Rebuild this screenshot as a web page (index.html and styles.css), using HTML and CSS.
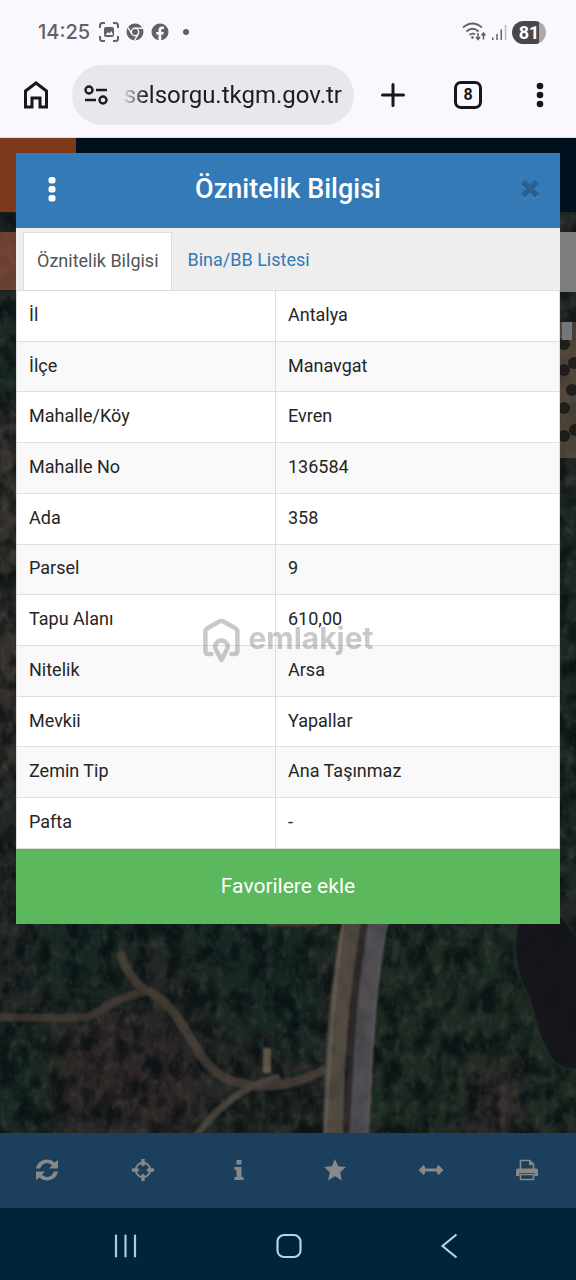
FILE: index.html
```html
<!DOCTYPE html>
<html lang="tr">
<head>
<meta charset="utf-8">
<meta name="viewport" content="width=device-width, initial-scale=1">
<title>Parsel Sorgu</title>
<link rel="stylesheet" href="styles.css">
</head>
<body>
<header class="chrome">
  <div class="status">
    <time class="clock">14:25</time>
    <svg width="20" height="20" viewBox="0 0 20 20" fill="none" stroke="#626166" stroke-width="2"><path d="M1 6V3.500Q1 1 3.500 1H6M14 1h2.500Q19 1 19 3.500V6M19 14v2.500Q19 19 16.500 19H14M6 19H3.500Q1 19 1 16.500V14"/><rect x="5" y="5" width="10" height="10" rx="2" fill="#626166" stroke="none"/><path d="M6.500 13l2.500-3 1.500 1.500L12.500 9l1.500 4z" fill="#f9f8fe" stroke="none"/></svg>
    <svg width="18" height="18" viewBox="0 0 18 18"><circle cx="9" cy="9" r="8.500" fill="#626166"/><circle cx="9" cy="9" r="3.700" fill="#626166" stroke="#f9f8fe" stroke-width="1.400"/><path d="M9 5.300h8M5.800 10.900L2 4.500M12.200 10.900L8.500 17.500" stroke="#f9f8fe" stroke-width="1.400"/></svg>
    <svg width="18" height="18" viewBox="0 0 18 18"><circle cx="9" cy="9" r="8.500" fill="#626166"/><path d="M7.500 18v-6.500H5.200V9h2.300V7.200C7.500 4.800 8.800 3.600 11 3.600l2 .2v2.100h-1.300c-1 0-1.400.6-1.400 1.400V9h2.500l-.4 2.500h-2.100V18z" fill="#f9f8fe"/></svg>
    <i class="more-dot"></i>
    <span class="spacer"></span>
    <div class="signal">
      <svg width="25" height="20" viewBox="0 0 25 20" fill="none" stroke="#626166" stroke-width="1.800"><path d="M1 5.500Q10.500-2.500 20 5.500M4.500 9.500Q10.500 4 16.500 9.500M7.500 13Q10.500 10.500 13 12.500"/><circle cx="10.500" cy="15.500" r="1" fill="#626166" stroke-width=".8"/><path d="M16 11v6M14 15l2 2.500 2-2.500M21.500 17.500v-6M19.500 13.500l2-2.500 2 2.500" stroke-width="1.500"/></svg>
      <svg width="15" height="17" viewBox="0 0 15 17"><path d="M0 13.500h1.500V16H0zM4.300 10h1.500v6H4.300zM8.500 5.500H10V16H8.500z" fill="#626166"/><path d="M12.800 1h1.500v15h-1.500z" fill="#bbbac0"/></svg>
      <span class="battery">81</span>
    </div>
  </div>
  <div class="browser">
    <button class="plain" aria-label="Ana sayfa"><svg width="26" height="28" viewBox="0 0 26 28" fill="none" stroke="#17171b" stroke-width="3"><path d="M2.500 10L13 2l10.500 8v16h-6.500v-9H9v9H2.500z"/></svg></button>
    <label class="address">
      <svg width="24" height="20" viewBox="0 0 24 20" fill="none" stroke="#1d1d21" stroke-width="2.400"><circle cx="5" cy="5" r="3.500"/><path d="M12 5h11M1 15h11"/><circle cx="19" cy="15" r="3.500"/></svg>
      <input type="text" value="selsorgu.tkgm.gov.tr" aria-label="Adres">
    </label>
    <div class="actions">
      <button class="plain" aria-label="Yeni sekme"><svg width="24" height="24" viewBox="0 0 24 24" stroke="#17171b" stroke-width="3" stroke-linecap="round"><path d="M12 1.500v21M1.500 12h21"/></svg></button>
      <button class="tabs-count">8</button>
      <button class="plain" aria-label="Menü"><svg width="8" height="26" viewBox="0 0 8 26" fill="#17171b"><circle cx="4" cy="4" r="3.300"/><circle cx="4" cy="13" r="3.300"/><circle cx="4" cy="22" r="3.300"/></svg></button>
    </div>
  </div>
</header>

<main class="app">
  <div class="app-bar"><div class="app-brand"></div></div>
  <div class="map">
    <svg viewBox="0 0 576 921" preserveAspectRatio="xMidYMid slice">
      <defs>
        <filter id="leaf" x="0" y="0" width="100%" height="100%" color-interpolation-filters="sRGB"><feTurbulence type="fractalNoise" baseFrequency=".06 .045" numOctaves="5" seed="8"/><feColorMatrix values="0 0 0 0 .03  0 0 0 0 .06  0 0 0 0 .07  3 0 0 0 -1.200"/></filter>
        <filter id="glow" x="0" y="0" width="100%" height="100%" color-interpolation-filters="sRGB"><feTurbulence type="fractalNoise" baseFrequency=".12 .08" numOctaves="4" seed="21"/><feColorMatrix values="0 0 0 0 .38  0 0 0 0 .38  0 0 0 0 .33  0 2.500 0 0 -1.200"/></filter>
        <filter id="soft" x="-30%" y="-30%" width="160%" height="160%"><feGaussianBlur stdDeviation="14"/></filter>
        <filter id="edge"><feGaussianBlur stdDeviation=".8"/></filter>
      </defs>
      <rect width="576" height="921" fill="#232725"/>
      <g filter="url(#soft)">
        <path d="M0 110h30v80H0z" fill="#15281f"/>
        <path d="M-10 205h40v360h-40z" fill="#38322d"/>
        <path d="M40 700h85v90H40zM-10 820h60v110h-60zM130 690h190v145l-80-20-60-80z" fill="#152622"/>
        <path d="M60 815l80-10 70 55-20 60H60z" fill="#2e2827"/>
        <path d="M375 710h130l40 100 31 30v80H365z" fill="#1c2b22"/>
        <path d="M555 270h30v420h-30z" fill="#1a2721"/>
        <path d="M475 850h40l10 70h-60z" fill="#30292a"/>
        <path d="M250 865h65v56h-90z" fill="#1a211f"/>
      </g>
      <rect width="576" height="921" filter="url(#leaf)" opacity=".75"/>
      <rect width="576" height="921" filter="url(#glow)" opacity=".28"/>
      <path d="M0 20h22v58H0z" fill="#724437"/>
      <path d="M552 110h24v136h-24z" fill="#51473b"/>
      <g fill="#211f1b"><circle cx="564" cy="132" r="6"/><circle cx="574" cy="151" r="6"/><circle cx="564" cy="158" r="6"/><circle cx="572" cy="178" r="6"/><circle cx="564" cy="196" r="6"/><circle cx="575" cy="218" r="6"/><circle cx="564" cy="224" r="6"/></g>
      <path d="M519 704Q508 745 525 778C535 798 535 820 547 840Q556 860 580 857V730L562 704z" fill="#12151c" stroke="#253029" stroke-width="2" filter="url(#edge)"/>
      <g fill="none" filter="url(#edge)">
        <path d="M120 740Q128 766 145 778C187 793 192 855 230 868Q275 884 326 857" stroke="#453e35" stroke-width="9"/>
        <path d="M-5 805Q65 807 87 805C105 798 118 784 145 780" stroke="#3f3931" stroke-width="8"/>
        <path d="M195 925Q232 875 280 865" stroke="#4c453d" stroke-width="7"/>
        <path d="M267 836v25" stroke="#64594b" stroke-width="8"/>
        <path d="M353 705C340 770 335 830 333 925" stroke="#524b42" stroke-width="20"/>
        <path d="M365 705C354 770 352 830 348 925" stroke="#302c2a" stroke-width="7"/>
        <path d="M379 705C365 780 364 845 359 925" stroke="#515052" stroke-width="19"/>
        <path d="M344 705C332 785 330 850 325 925" stroke="#6b6258" stroke-width="2"/>
        <path d="M389 705C373 780 372 845 368 925" stroke="#68655f" stroke-width="1"/>
        <path d="M267 711h48l12-7" stroke="#443a2d" stroke-width="7"/>
      </g>
      <rect width="576" height="921" filter="url(#leaf)" opacity=".15"/>
      <path d="M560 20h16v60h-16z" fill="#7d7d7d"/>
      <path d="M562 110h10v18h-10z" fill="#73777a"/>
    </svg>
  </div>
  <nav class="toolbar">
    <button aria-label="Yenile"><svg width="22" height="22" viewBox="0 0 22 22" fill="#888"><path d="M0 9.500C1 4 5.500.5 11 .5c3 0 5.500 1.200 7.500 3L22 1v8.500h-9l3-3C14.500 5 13 4 11 4c-3.300 0-5.800 2.500-6.800 5.500zM22 12.500c-1 5.500-5.500 9-11 9-3 0-5.500-1.200-7.500-3L0 21v-8.500h9l-3 3c1.500 1.500 3 2.500 5 2.500 3.300 0 5.800-2.500 6.800-5.500z"/></svg></button>
    <button aria-label="Konum"><svg width="22" height="22" viewBox="0 0 22 22"><circle cx="11" cy="11" r="7.200" fill="none" stroke="#888" stroke-width="2"/><path d="M9.300 0h3.400v6L11 7.500 9.300 6zM9.300 22h3.400v-6L11 14.500 9.300 16zM0 9.300v3.400h6L7.500 11 6 9.300zM22 9.300v3.400h-6L14.500 11 16 9.300z" fill="#888"/></svg></button>
    <button aria-label="Bilgi"><svg width="10" height="20" viewBox="0 0 10 20" fill="#888"><path d="M2.500 0h5v4.500h-5zM.5 7h7v10H9.500v3H.5v-3h2v-7h-2z"/></svg></button>
    <button aria-label="Favoriler"><svg width="22" height="22" viewBox="0 0 22 22" fill="#888"><path d="M11 0l3.200 7.200 7.800.8-5.800 5.300 1.700 8.200L11 17.300l-6.900 4.200 1.700-8.200L0 8l7.800-.8z"/></svg></button>
    <button aria-label="Ölçüm"><svg width="26" height="12" viewBox="0 0 26 12" fill="#888"><path d="M.5 6l5-5L7 2.500v2h12v-2L20.500 1l5 5-5 5L19 9.500v-2H7v2L5.500 11z"/></svg></button>
    <button aria-label="Yazdır"><svg width="22" height="22" viewBox="0 0 22 22"><path d="M4.500 10V1.500h9L17.500 5v5" fill="none" stroke="#888" stroke-width="1.600"/><path d="M13 1v5h5z" fill="#888"/><path d="M2 9.500h18a2 2 0 0 1 2 2V17h-3.500v-3h-15v3H0v-5.500a2 2 0 0 1 2-2z" fill="#888"/><path d="M4.500 15.500h13v5h-13z" fill="none" stroke="#888" stroke-width="1.600"/></svg></button>
  </nav>

  <section class="dialog" role="dialog" aria-labelledby="dialog-title">
    <header class="dialog-head">
      <button class="plain" aria-label="Seçenekler"><svg width="8" height="26" viewBox="0 0 8 26" fill="#fff"><rect x=".5" y="1" width="7" height="6.500" rx="2.500"/><rect x=".5" y="10" width="7" height="6.500" rx="2.500"/><rect x=".5" y="19" width="7" height="6.500" rx="2.500"/></svg></button>
      <h1 id="dialog-title">Öznitelik Bilgisi</h1>
      <button class="plain" aria-label="Kapat"><svg width="20" height="20" viewBox="0 0 20 20" stroke-width="6"><path d="M3 4l14 14M17 4L3 18" stroke="#5291c5"/><path d="M3 3l14 14M17 3L3 17" stroke="#296193"/></svg></button>
    </header>
    <div class="tabs" role="tablist">
      <button class="tab tab-active" role="tab" aria-selected="true">Öznitelik Bilgisi</button>
      <button class="tab" role="tab" aria-selected="false">Bina/BB Listesi</button>
    </div>
    <table class="details">
      <tbody>
        <tr><th scope="row">İl</th><td>Antalya</td></tr>
        <tr><th scope="row">İlçe</th><td>Manavgat</td></tr>
        <tr><th scope="row">Mahalle/Köy</th><td>Evren</td></tr>
        <tr><th scope="row">Mahalle No</th><td>136584</td></tr>
        <tr><th scope="row">Ada</th><td>358</td></tr>
        <tr><th scope="row">Parsel</th><td>9</td></tr>
        <tr><th scope="row">Tapu Alanı</th><td>610,00</td></tr>
        <tr><th scope="row">Nitelik</th><td>Arsa</td></tr>
        <tr><th scope="row">Mevkii</th><td>Yapallar</td></tr>
        <tr><th scope="row">Zemin Tip</th><td>Ana Taşınmaz</td></tr>
        <tr><th scope="row">Pafta</th><td>-</td></tr>
      </tbody>
    </table>
    <button class="favorite">Favorilere ekle</button>
  </section>
</main>

<nav class="system-nav">
  <button class="plain" aria-label="Son uygulamalar"><svg width="24" height="24" viewBox="0 0 24 24" stroke="#a9cede" stroke-width="2.200" stroke-linecap="round"><path d="M2 1.500v21M11.500 1.500v21M21 1.500v21"/></svg></button>
  <button class="plain" aria-label="Ana ekran"><svg width="26" height="26" viewBox="0 0 26 26"><rect x="1.500" y="2" width="23" height="22" rx="6.500" fill="none" stroke="#b3d5e8" stroke-width="2.200"/></svg></button>
  <button class="plain" aria-label="Geri"><svg width="18" height="26" viewBox="0 0 18 26" fill="none" stroke="#b3d5e8" stroke-width="2.200"><path d="M16.500 1.500L2.500 13l14 11.500"/></svg></button>
</nav>

<div class="watermark" aria-hidden="true">
  <svg width="38" height="46" viewBox="0 0 38 46" fill="none" stroke="currentColor" stroke-width="4.500" stroke-linecap="round" stroke-linejoin="round"><path d="M9 37H6Q3 37 3 34V14Q3 12.500 4.500 11.500L17 4.500Q19 3.500 21 4.500L33.500 11.500Q35 12.500 35 14V34Q35 37 32 37H29"/><path d="M19 43l-5-9.500Q11.500 29 14 26q2-2.500 5-2.500t5 2.500q2.500 3 0 7.500z"/></svg>
  <span>emlakjet</span>
</div>
</body>
</html>
```
FILE: styles.css
```css
* {
  box-sizing: border-box;
}

body {
  position: relative;
  display: flex;
  flex-direction: column;
  min-height: 100vh;
  margin: 0;
  background: #00243a;
  color: #252525;
  font-family: Roboto, "Noto Sans", sans-serif;
  font-size: 18px;
}

svg {
  display: block;
  flex: none;
}

button,
input {
  padding: 0;
  border: 0;
  background: none;
  color: inherit;
  font: inherit;
}

.plain {
  display: grid;
  place-items: center;
}

/* Status bar and browser bar */
.chrome {
  background: #f9f8fe;
  border-bottom: 1px solid #dadce3;
}

.status {
  display: flex;
  align-items: center;
  gap: 7px;
  height: 64px;
  padding: 0 30px 0 38px;
}

.clock {
  margin-right: 2px;
  color: #626166;
  font-family: Inter, Roboto, sans-serif;
  font-size: 20px;
  font-weight: 500;
}

.more-dot {
  width: 6px;
  height: 6px;
  margin-left: 7px;
  border-radius: 50%;
  background: #626166;
}

.spacer {
  flex: 1;
}

.signal {
  display: flex;
  align-items: center;
  gap: 5px;
}

.battery {
  width: 34px;
  border-radius: 12px;
  background: linear-gradient(90deg, #48474c 80%, #aaa9ae 80%);
  color: #fff;
  font-size: 18px;
  font-weight: 700;
  line-height: 23px;
  text-align: center;
}

.browser {
  display: flex;
  align-items: center;
  gap: 23px;
  height: 73px;
  padding: 0 32px 12px 23px;
}

.address {
  display: flex;
  flex: 1;
  align-items: center;
  gap: 14px;
  min-width: 0;
  height: 60px;
  padding: 0 12px;
  border-radius: 30px;
  background: #e8e7ed;
}

.address input {
  flex: 1;
  width: 0;
  min-width: 0;
  color: #1d1d21;
  font-size: 24px;
  text-align: right;
  -webkit-mask-image: linear-gradient(90deg, transparent, #000 24px);
  mask-image: linear-gradient(90deg, transparent, #000 24px);
}

.actions {
  display: flex;
  flex: none;
  align-items: center;
  width: 167px;
  padding-left: 4px;
}

.actions :last-child {
  margin-left: auto;
}

.tabs-count {
  width: 28px;
  height: 28px;
  margin-left: 49px;
  border: 3px solid #17171b;
  border-radius: 7px;
  color: #17171b;
  font-size: 16px;
  font-weight: 700;
  line-height: 20px;
}

/* Map page under the dialog */
.app {
  position: relative;
  display: flex;
  flex: 1;
  flex-direction: column;
}

.app-bar {
  height: 74px;
  background: #00101c;
}

.app-brand {
  width: 76px;
  height: 100%;
  background: #7c3a1b;
}

.map {
  position: relative;
  flex: 1;
  overflow: hidden;
  background: #202624;
}

.map svg {
  position: absolute;
  inset: 0;
  width: 100%;
  height: 100%;
}

.toolbar {
  display: grid;
  grid-template-columns: repeat(6, 1fr);
  height: 75px;
  background: #1b3f5d;
}

.toolbar button {
  display: grid;
  place-items: center;
  padding: 0 3px 2px 0;
}

/* Attribute dialog */
.dialog {
  position: absolute;
  top: 15px;
  right: 16px;
  left: 16px;
  background: #fff;
}

.dialog-head {
  display: flex;
  align-items: center;
  justify-content: space-between;
  height: 75px;
  padding: 0 20px 3px 32px;
  background: #337ab7;
  color: #fff;
}

.dialog-head h1 {
  margin: 0;
  font-size: 27px;
  font-weight: 500;
}

.tabs {
  display: flex;
  height: 62px;
  padding: 4px 7px 0;
  background: #eee;
}

.tab {
  padding: 0 16px 4px;
  color: #337ab7;
}

.tab-active {
  padding: 0 12px 3px 13px;
  border: 1px solid #ddd;
  border-bottom: 0;
  background: #fff;
  color: #555;
}

.details {
  width: 100%;
  height: 559px;
  border-collapse: collapse;
  table-layout: fixed;
}

.details th,
.details td {
  padding: 8px 12px 11px;
  border: 1px solid #ddd;
  font-weight: 400;
  text-align: left;
}

.details th {
  width: 259px;
}

.details tr:nth-child(even) {
  background: #f9f9f9;
}

.favorite {
  display: block;
  width: 100%;
  height: 75px;
  padding-bottom: 2px;
  background: #5cb85c;
  color: #fff;
  font-size: 21px;
}

.system-nav {
  display: flex;
  align-items: center;
  justify-content: space-between;
  height: 72px;
  padding: 4px 118px 0 114px;
}

/* Watermark over the page centre */
.watermark {
  position: absolute;
  top: 50%;
  left: 50%;
  display: flex;
  align-items: center;
  gap: 8px;
  color: #808080;
  font-family: Inter, sans-serif;
  font-size: 30px;
  font-weight: 700;
  line-height: 42px;
  opacity: .42;
  pointer-events: none;
  transform: translate(-50%, -50%);
}

.watermark span {
  padding-bottom: 4px;
}
```
